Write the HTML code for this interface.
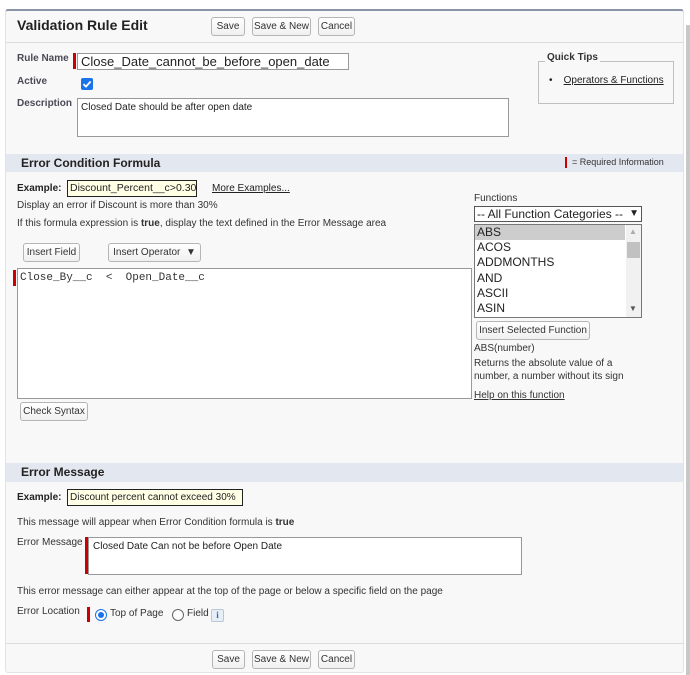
<!DOCTYPE html>
<html><head><meta charset="utf-8"><style>
*{box-sizing:border-box;margin:0;padding:0}
body{width:690px;height:675px;background:#fff;font-family:"Liberation Sans",Arial,sans-serif;font-size:11px;color:#222;position:relative;overflow:hidden}
.a{position:absolute;white-space:nowrap}
.panel{position:absolute;left:5px;top:9px;width:679px;height:664px;background:#f8f8f8;border-top:2px solid #8a94a8;border-left:1px solid #e2e2e2;border-right:1px solid #e2e2e2;border-bottom:1px solid #e2e2e2;border-radius:3px}
.sb{position:absolute;left:686px;top:25px;width:4px;height:650px;background:#c8c8c8}
.btn{position:absolute;height:19px;border:1px solid #b5b5b5;border-radius:3px;background:linear-gradient(#fff,#f0f0f0);font-size:10px;color:#333;text-align:center;line-height:17px}
.lbl{position:absolute;font-size:10px;font-weight:bold;color:#4a4a56}
.red{position:absolute;background:#c00;width:3px}
.box{position:absolute;background:#fff;border:1px solid #999}
.band{position:absolute;left:6px;width:677px;background:#e3e7ef;font-size:12px;font-weight:bold;color:#222}
.ex{position:absolute;background:#ffffe6;border:1px solid #222;font-size:11px;padding-left:2px;line-height:15px}
.hr{position:absolute;left:6px;width:677px;height:1px;background:#dcdcdc}
u{text-decoration:underline}
</style></head><body>
<div class="panel"></div>
<div class="sb"></div>
<div class="a" style="left:17px;top:17px;font-size:14px;font-weight:bold;color:#222">Validation Rule Edit</div>
<div class="btn" style="left:211px;top:17px;width:34px">Save</div>
<div class="btn" style="left:252px;top:17px;width:59px">Save &amp; New</div>
<div class="btn" style="left:318px;top:17px;width:37px">Cancel</div>
<div class="hr" style="top:42px"></div>

<div class="lbl" style="left:17px;top:53px">Rule Name</div>
<div class="red" style="left:73px;top:53px;height:16px"></div>
<div class="box" style="left:77px;top:53px;width:272px;height:17px;font-size:13px;line-height:15px;padding-left:3px">Close_Date_cannot_be_before_open_date</div>
<div class="lbl" style="left:17px;top:76px">Active</div>
<div class="a" style="left:81px;top:78px;width:12px;height:12px;background:#1a73e8;border-radius:2px"><svg width="12" height="12" viewBox="0 0 12 12"><path d="M2.5 6.2 L5 8.6 L9.6 3.5" stroke="#fff" stroke-width="1.8" fill="none"/></svg></div>
<div class="lbl" style="left:17px;top:98px">Description</div>
<div class="box" style="left:77px;top:98px;width:432px;height:39px;font-size:10px;padding:3px">Closed Date should be after open date</div>

<div class="a" style="left:538px;top:61px;width:136px;height:43px;border:1px solid #c0c0c0"></div>
<div class="a" style="left:545px;top:52px;font-size:10px;font-weight:bold;background:#f8f8f8;padding:0 2px;color:#333">Quick Tips</div>
<div class="a" style="left:549px;top:75px;font-size:10px;color:#222">•&nbsp;&nbsp;&nbsp;&nbsp;<u>Operators &amp; Functions</u></div>

<div class="band" style="top:154px;height:18px;line-height:18px;padding-left:15px">Error Condition Formula</div>
<div class="red" style="left:565px;top:157px;height:11px;width:2px"></div>
<div class="a" style="left:572px;top:157px;font-size:9px;color:#333">= Required Information</div>

<div class="a" style="left:17px;top:183px;font-weight:bold;font-size:10px">Example:</div>
<div class="ex" style="left:67px;top:180px;width:130px;height:17px;font-size:10.5px">Discount_Percent__c&gt;0.30</div>
<div class="a" style="left:212px;top:183px;font-size:10px"><u>More Examples...</u></div>
<div class="a" style="left:17px;top:200px;font-size:10px;color:#333">Display an error if Discount is more than 30%</div>
<div class="a" style="left:17px;top:218px;font-size:10px;color:#333">If this formula expression is <b>true</b>, display the text defined in the Error Message area</div>

<div class="btn" style="left:23px;top:243px;width:57px">Insert Field</div>
<div class="btn" style="left:108px;top:243px;width:93px">Insert Operator &nbsp;▼</div>
<div class="red" style="left:13px;top:270px;height:16px"></div>
<div class="box" style="left:17px;top:268px;width:455px;height:131px;font-family:'Liberation Mono',monospace;font-size:11px;padding:3px 2px;color:#333">Close_By__c&nbsp;&nbsp;&lt;&nbsp;&nbsp;Open_Date__c</div>
<div class="btn" style="left:20px;top:402px;width:68px">Check Syntax</div>

<div class="a" style="left:474px;top:193px;font-size:10px;color:#333">Functions</div>
<div class="box" style="left:474px;top:206px;width:168px;height:16px;border-color:#555;font-size:12px;line-height:14px;padding-left:2px">-- All Function Categories --<span style="position:absolute;right:2px;top:0;font-size:10px">▼</span></div>
<div class="box" style="left:474px;top:224px;width:168px;height:94px;border-color:#777;font-size:12px;line-height:15.2px;overflow:hidden">
<div style="background:#cdcdcd;width:150px;padding-left:2px">ABS</div>
<div style="padding-left:2px">ACOS</div><div style="padding-left:2px">ADDMONTHS</div><div style="padding-left:2px">AND</div><div style="padding-left:2px">ASCII</div><div style="padding-left:2px">ASIN</div>
<div style="position:absolute;left:151px;top:0;width:16px;height:92px;background:#f1f1f1"></div>
<div style="position:absolute;left:152px;top:17px;width:13px;height:16px;background:#c1c1c1"></div>
<div style="position:absolute;left:154px;top:2px;font-size:8px;color:#aaa;line-height:10px">▲</div>
<div style="position:absolute;left:154px;top:79px;font-size:8px;color:#555;line-height:10px">▼</div>
</div>
<div class="btn" style="left:476px;top:321px;width:114px">Insert Selected Function</div>
<div class="a" style="left:474px;top:343px;font-size:10px;color:#333">ABS(number)</div>
<div class="a" style="left:474px;top:357px;font-size:10px;color:#333;line-height:13px">Returns the absolute value of a<br>number, a number without its sign</div>
<div class="a" style="left:474px;top:390px;font-size:10px;color:#333"><u>Help on this function</u></div>

<div class="band" style="top:463px;height:19px;line-height:19px;padding-left:15px">Error Message</div>
<div class="a" style="left:17px;top:492px;font-weight:bold;font-size:10px">Example:</div>
<div class="ex" style="left:67px;top:489px;width:176px;height:17px;font-size:10px">Discount percent cannot exceed 30%</div>
<div class="a" style="left:17px;top:517px;font-size:10px;color:#333">This message will appear when Error Condition formula is <b>true</b></div>
<div class="lbl" style="left:17px;top:537px;font-weight:normal;color:#333">Error Message</div>
<div class="red" style="left:85px;top:537px;height:37px"></div>
<div class="box" style="left:88px;top:537px;width:434px;height:38px;font-size:10px;padding:3px 4px">Closed Date Can not be before Open Date</div>
<div class="a" style="left:17px;top:586px;font-size:10px;color:#333">This error message can either appear at the top of the page or below a specific field on the page</div>
<div class="lbl" style="left:17px;top:606px;font-weight:normal;color:#333">Error Location</div>
<div class="red" style="left:87px;top:607px;height:15px"></div>
<div class="a" style="left:95px;top:609px;width:12px;height:12px;border-radius:50%;border:1px solid #1a73e8;background:#fff"><div style="position:absolute;left:2px;top:2px;width:6px;height:6px;border-radius:50%;background:#1a73e8"></div></div>
<div class="a" style="left:110px;top:608px;font-size:10px;color:#333">Top of Page</div>
<div class="a" style="left:172px;top:609px;width:12px;height:12px;border-radius:50%;border:1px solid #666;background:#fff"></div>
<div class="a" style="left:187px;top:608px;font-size:10px;color:#333">Field</div>
<div class="a" style="left:211px;top:609px;width:13px;height:13px;border:1px solid #b9c6d6;border-radius:2px;background:#e8eef6;font-size:9px;font-weight:bold;color:#2a6fb5;text-align:center;line-height:11px;font-family:'Liberation Serif',serif">i</div>

<div class="hr" style="top:643px"></div>
<div class="btn" style="left:212px;top:650px;width:33px">Save</div>
<div class="btn" style="left:252px;top:650px;width:59px">Save &amp; New</div>
<div class="btn" style="left:318px;top:650px;width:37px">Cancel</div>
</body></html>
